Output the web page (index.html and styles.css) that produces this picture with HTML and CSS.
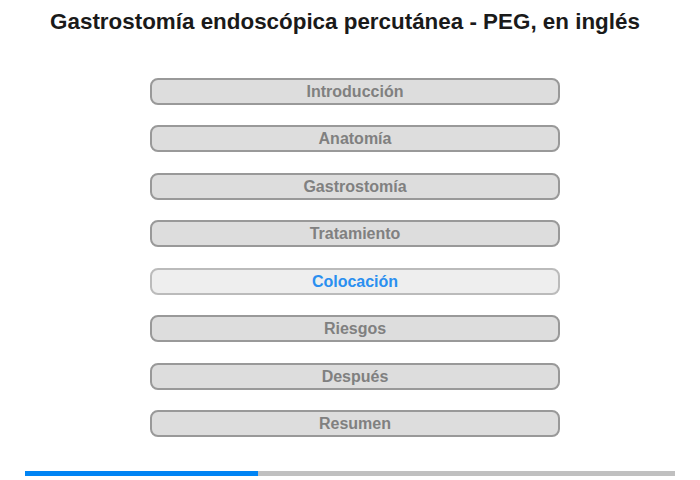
FILE: index.html
```html
<!DOCTYPE html>
<html lang="es">
<head>
<meta charset="utf-8">
<link rel="stylesheet" href="styles.css">
</head>
<body>
<div class="page">
  <h1 class="title">Gastrostomía endoscópica percutánea - PEG, en inglés</h1>
  <nav class="menu">
    <div class="item">Introducción</div>
    <div class="item">Anatomía</div>
    <div class="item">Gastrostomía</div>
    <div class="item">Tratamiento</div>
    <div class="item active">Colocación</div>
    <div class="item">Riesgos</div>
    <div class="item">Después</div>
    <div class="item">Resumen</div>
  </nav>
  <div class="progress"><div class="progress-fill" style="width:35.8%"></div></div>
</div>
</body>
</html>
```
FILE: styles.css
```css
html, body { margin: 0; padding: 0; background: #fff; }
body { font-family: "Liberation Sans", Arial, sans-serif; }
.page { width: 700px; height: 480px; }
.title {
  margin: 0;
  padding: 9px 10px 0 0;
  font-size: 22.4px;
  line-height: 26px;
  font-weight: bold;
  color: #1a1a1a;
  text-align: center;
}
.menu {
  display: flex;
  flex-direction: column;
  align-items: center;
  gap: 20.45px;
  margin-top: 43px;
  padding-left: 10px;
}
.item {
  box-sizing: border-box;
  width: 410px;
  height: 27px;
  border: 2px solid #999;
  border-radius: 8px;
  background: #ddd;
  color: #808080;
  font-size: 16px;
  font-weight: bold;
  line-height: 23px;
  text-align: center;
}
.item.active {
  background: #eee;
  border-color: #bbb;
  color: #2a8ff0;
}
.progress {
  margin: 34px 25px 0;
  height: 5px;
  background: #c0c0c0;
}
.progress-fill { height: 100%; background: #0084f4; }
```
